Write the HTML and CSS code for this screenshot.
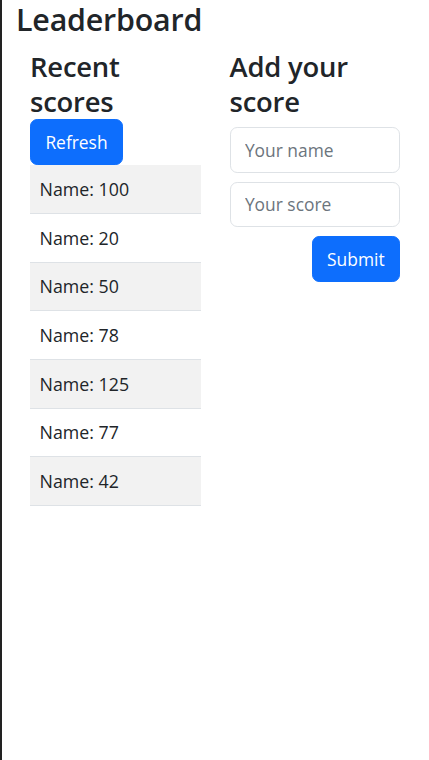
FILE: index.html
```html
<!DOCTYPE html>
<html lang="en">
<head>
<meta charset="utf-8">
<title>Leaderboard</title>
<link rel="stylesheet" href="styles.css">
</head>
<body>
  <h1 class="title">Leaderboard</h1>
  <div class="board">
    <section class="col">
      <h2 class="heading">Recent scores</h2>
      <button class="btn" type="button">Refresh</button>
      <table class="scores">
        <tbody>
          <tr><td>Name: 100</td></tr>
          <tr><td>Name: 20</td></tr>
          <tr><td>Name: 50</td></tr>
          <tr><td>Name: 78</td></tr>
          <tr><td>Name: 125</td></tr>
          <tr><td>Name: 77</td></tr>
          <tr><td>Name: 42</td></tr>
        </tbody>
      </table>
    </section>
    <section class="col">
      <h2 class="heading heading-form">Add your score</h2>
      <form class="score-form">
        <input class="field" type="text" placeholder="Your name">
        <input class="field" type="text" placeholder="Your score">
        <div class="actions">
          <button class="btn" type="button">Submit</button>
        </div>
      </form>
    </section>
  </div>
</body>
</html>
```

FILE: styles.css
```css
html, body {
  height: 100%;
}
body {
  margin: 0;
  border-left: 2px solid #222;
  box-sizing: border-box;
  font-family: "Open Sans", "Noto Sans", sans-serif;
  font-size: 17.8px;
  line-height: 28.8px;
  color: #212529;
  background: #fff;
}
.title {
  margin: 0 0 9.6px;
  padding-left: 14px;
  font-size: 30.4px;
  font-weight: 600;
  line-height: 39.4px;
  letter-spacing: -0.2px;
}
.board {
  display: grid;
  grid-template-columns: 1fr 1fr;
  column-gap: 29px;
  padding: 0 29px 0 28px;
}
.col {
  min-width: 0;
}
.heading {
  margin: 0;
  font-size: 27.4px;
  font-weight: 600;
  line-height: 35.2px;
  letter-spacing: -0.2px;
}
.heading-form {
  margin-bottom: 8px;
}
.btn {
  display: inline-block;
  font-family: inherit;
  font-size: 17.4px;
  line-height: 28.8px;
  padding: 7.6px 14.4px;
  color: #fff;
  background: #0d6efd;
  border: 1px solid #0d6efd;
  border-radius: 7.2px;
  cursor: pointer;
}
.scores {
  width: 100%;
  border-collapse: collapse;
}
.scores td {
  padding: 9.45px 9.6px;
  border-bottom: 1px solid #dee2e6;
}
.scores tr:nth-child(odd) td {
  background: #f2f2f2;
}
.score-form {
  display: flex;
  flex-direction: column;
  gap: 9.6px;
}
.field {
  display: block;
  width: 100%;
  box-sizing: border-box;
  font-family: inherit;
  font-size: 17.4px;
  line-height: 28.8px;
  padding: 7.2px 14.4px;
  color: #212529;
  background: #fff;
  border: 1px solid #dee2e6;
  border-radius: 7.2px;
}
.field::placeholder {
  color: #6c757d;
}
.actions {
  display: flex;
  justify-content: flex-end;
  margin-top: -1px;
}
```
